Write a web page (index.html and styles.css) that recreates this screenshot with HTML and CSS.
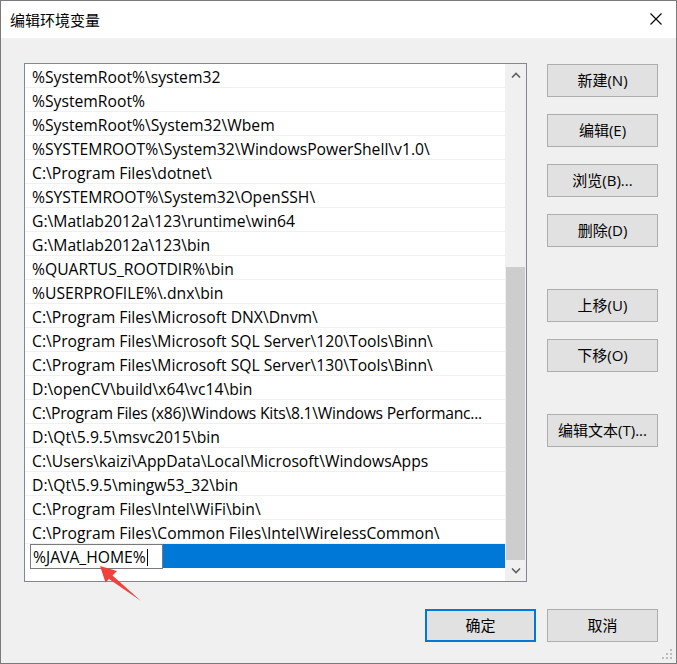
FILE: index.html
```html
<!DOCTYPE html>
<html lang="zh-CN">
<head>
<meta charset="utf-8">
<title>编辑环境变量</title>
<link rel="stylesheet" href="styles.css">
</head>
<body>
<div class="window">
  <div class="titlebar">
    <span class="title">编辑环境变量</span>
    <svg class="close" width="12" height="12" viewBox="0 0 12 12"><path d="M0.5 0.5 L11.5 11.5 M11.5 0.5 L0.5 11.5" stroke="#000" stroke-width="1.1" fill="none"/></svg>
  </div>
  <div class="content">
    <div class="main">
      <div class="listbox">
        <div class="rows">
          <div class="row">%SystemRoot%\system32</div>
          <div class="row">%SystemRoot%</div>
          <div class="row">%SystemRoot%\System32\Wbem</div>
          <div class="row">%SYSTEMROOT%\System32\WindowsPowerShell\v1.0\</div>
          <div class="row">C:\Program Files\dotnet\</div>
          <div class="row">%SYSTEMROOT%\System32\OpenSSH\</div>
          <div class="row">G:\Matlab2012a\123\runtime\win64</div>
          <div class="row">G:\Matlab2012a\123\bin</div>
          <div class="row">%QUARTUS_ROOTDIR%\bin</div>
          <div class="row">%USERPROFILE%\.dnx\bin</div>
          <div class="row">C:\Program Files\Microsoft DNX\Dnvm\</div>
          <div class="row">C:\Program Files\Microsoft SQL Server\120\Tools\Binn\</div>
          <div class="row">C:\Program Files\Microsoft SQL Server\130\Tools\Binn\</div>
          <div class="row">D:\openCV\build\x64\vc14\bin</div>
          <div class="row trunc">C:\Program Files (x86)\Windows Kits\8.1\Windows Performanc...</div>
          <div class="row">D:\Qt\5.9.5\msvc2015\bin</div>
          <div class="row">C:\Users\kaizi\AppData\Local\Microsoft\WindowsApps</div>
          <div class="row">D:\Qt\5.9.5\mingw53_32\bin</div>
          <div class="row">C:\Program Files\Intel\WiFi\bin\</div>
          <div class="row">C:\Program Files\Common Files\Intel\WirelessCommon\</div>
          <div class="row selected"><span class="editbox">%JAVA_HOME%<span class="caret"></span></span><span class="highlight"></span></div>
        </div>
        <div class="scrollbar">
          <div class="sb-btn">
            <svg width="10" height="6" viewBox="0 0 10 6"><path d="M1 5.5 L5 1.5 L9 5.5" stroke="#606060" stroke-width="1.6" fill="none"/></svg>
          </div>
          <div class="sb-track">
            <div class="sb-space"></div>
            <div class="sb-thumb"></div>
          </div>
          <div class="sb-btn">
            <svg width="10" height="6" viewBox="0 0 10 6"><path d="M1 0.5 L5 4.5 L9 0.5" stroke="#606060" stroke-width="1.6" fill="none"/></svg>
          </div>
        </div>
      </div>
      <div class="side">
        <div class="group">
          <button class="btn">新建(N)</button>
          <button class="btn">编辑(E)</button>
          <button class="btn">浏览(B)...</button>
          <button class="btn">删除(D)</button>
        </div>
        <div class="group">
          <button class="btn">上移(U)</button>
          <button class="btn">下移(O)</button>
        </div>
        <div class="group">
          <button class="btn">编辑文本(T)...</button>
        </div>
      </div>
    </div>
    <div class="footer">
      <button class="btn default">确定</button>
      <button class="btn">取消</button>
    </div>
  </div>
  <svg class="arrow" width="50" height="40" viewBox="95 562 50 40"><polygon points="100,566 117,571 112.5,575.5 141,601 109,579 105.5,582.5" fill="#f0413d"/></svg>
  <svg class="grip" width="14" height="12" viewBox="0 0 14 12"><g fill="#bcbcbc"><rect x="10" y="0" width="2" height="2"/><rect x="6" y="4" width="2" height="2"/><rect x="10" y="4" width="2" height="2"/><rect x="2" y="8" width="2" height="2"/><rect x="6" y="8" width="2" height="2"/><rect x="10" y="8" width="2" height="2"/></g></svg>
</div>
</body>
</html>
```

FILE: styles.css
```css
html, body {
  margin: 0;
  padding: 0;
  background: #f0f0f0;
}

.window {
  position: relative;
  width: 677px;
  height: 664px;
  box-sizing: border-box;
  border: 1px solid #7a7a7a;
  background: #f0f0f0;
  font-family: "Open Sans", "Noto Sans CJK SC", sans-serif;
  font-size: 15px;
  color: #000;
  overflow: hidden;
}

.titlebar {
  height: 37px;
  background: #fff;
  display: flex;
  align-items: center;
  justify-content: space-between;
  padding: 0 14px 1px 9px;
  box-sizing: border-box;
}

.title {
  font-family: "Noto Sans CJK SC", sans-serif;
  font-size: 15px;
  line-height: 1;
}

.close {
  display: block;
}

.content {
  padding: 25px 18px 0 23px;
}

.main {
  display: flex;
  gap: 20px;
}

.listbox {
  width: 503px;
  height: 519px;
  box-sizing: border-box;
  border: 1px solid #828790;
  background: #fff;
  display: flex;
}

.rows {
  flex: 1;
  min-width: 0;
}

.row {
  height: 21px;
  padding-top: 2px;
  border-bottom: 1px solid #f0f0f0;
  padding-left: 7px;
  line-height: 23px;
  font-size: 15.7px;
  white-space: nowrap;
  overflow: hidden;
}

.row.trunc {
  letter-spacing: -0.25px;
}

.row.selected {
  background: #fff;
  border-bottom: 0;
  height: 24px;
  padding-top: 0;
  padding-left: 5px;
  display: flex;
  align-items: flex-start;
  overflow: visible;
}

.editbox {
  display: inline-flex;
  align-items: center;
  box-sizing: border-box;
  width: 133px;
  height: 25px;
  flex: none;
  border: 1px solid #7a7a7a;
  background: #fff;
  color: #000;
  padding: 1px 0 0 2px;
  line-height: 23px;
}

.highlight {
  flex: 1;
  height: 24px;
  background: #0078d7;
}

.caret {
  display: inline-block;
  width: 1px;
  height: 17px;
  background: #000;
  margin-left: 1px;
}

.scrollbar {
  width: 21px;
  display: flex;
  flex-direction: column;
  background: #f0f0f0;
}

.sb-btn {
  height: 21px;
  display: flex;
  align-items: center;
  justify-content: center;
}

.sb-track {
  flex: 1;
  display: flex;
  flex-direction: column;
  padding: 0 1px;
}

.sb-space {
  height: 182px;
}

.sb-thumb {
  flex: 1;
  background: #cdcdcd;
}

.side {
  display: flex;
  flex-direction: column;
  gap: 42px;
  padding-top: 1px;
}

.group {
  display: flex;
  flex-direction: column;
  gap: 17px;
}

.btn {
  width: 111px;
  height: 33px;
  box-sizing: border-box;
  border: 1px solid #adadad;
  background: #e1e1e1;
  font-family: "Open Sans", "Noto Sans CJK SC", sans-serif;
  font-size: 15px;
  color: #000;
  padding: 0 0 3px 0;
  margin: 0;
}

.btn.default {
  border: 2px solid #0078d7;
}

.footer {
  display: flex;
  justify-content: flex-end;
  gap: 11px;
  margin-top: 27px;
}

.arrow {
  position: absolute;
  left: 94px;
  top: 561px;
}

.grip {
  position: absolute;
  right: 2px;
  bottom: 2px;
}
```
